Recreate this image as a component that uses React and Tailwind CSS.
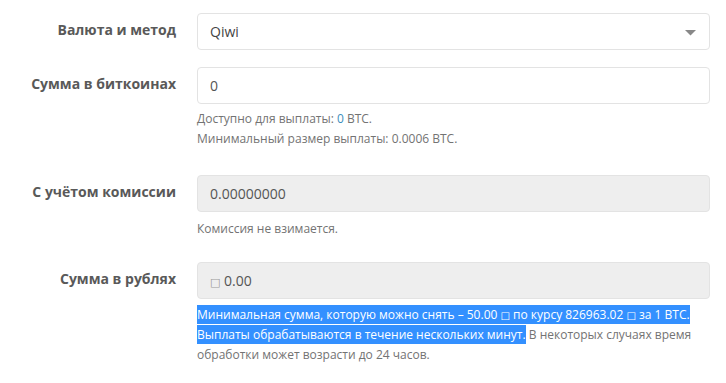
import React from "react";

const tofuFont = { fontFamily: '"DejaVu Sans", sans-serif' };

function Row({ label, children, className = "" }) {
  return (
    <div className={`flex items-start ${className}`}>
      <label className="w-[177px] shrink-0 pr-px pt-[7px] text-right text-[14px] font-bold leading-5 text-[#595959]">
        {label}
      </label>
      <div className="ml-[20px] w-[513px]">{children}</div>
    </div>
  );
}

function Field({ value, disabled }) {
  return (
    <div
      className={`flex h-[37px] items-center rounded border border-[#e3e3e3] px-3 text-[14px] text-[#555] ${
        disabled ? "bg-[#eeeeee]" : "bg-white"
      }`}
    >
      {value}
    </div>
  );
}

function Help({ children, className = "" }) {
  return <div className={`text-[12px] leading-5 text-[#737373] ${className}`}>{children}</div>;
}

export default function App() {
  return (
    <div
      className="min-h-[383px] w-[726px] bg-white pt-[13px]"
      style={{ fontFamily: '"Open Sans", "DejaVu Sans", sans-serif' }}
    >
      <Row label="Валюта и метод">
        <div className="relative flex h-[37px] items-center rounded border border-[#e3e3e3] bg-white px-3 text-[14px] text-[#444]">
          Qiwi
          <svg className="absolute right-[13px] top-[16px]" width="11" height="6" viewBox="0 0 11 6">
            <path d="M0 0 H11 L5.5 5.5 Z" fill="#888" />
          </svg>
        </div>
      </Row>

      <Row label="Сумма в биткоинах" className="mt-[17px]">
        <Field value="0" />
        <Help className="mt-[5px]">
          <div>
            Доступно для выплаты: <span className="text-[#3c8dbc]">0</span> BTC.
          </div>
          <div>Минимальный размер выплаты: 0.0006 BTC.</div>
        </Help>
      </Row>

      <Row label="С учётом комиссии" className="mt-[26px]">
        <Field value="0.00000000" disabled />
        <Help className="mt-[7px]">Комиссия не взимается.</Help>
      </Row>

      <Row label="Сумма в рублях" className="mt-[23px]">
        <Field
          disabled
          value={
            <span>
              <span className="text-[11px] text-[#999]" style={tofuFont}>□</span> 0.00
            </span>
          }
        />
        <Help className="mt-[6px] pr-[14px]">
          <span className="box-decoration-clone bg-[#3390ff] py-px text-white">
            Минимальная сумма, которую можно снять – 50.00{" "}
            <span className="text-[10px] leading-3" style={tofuFont}>□</span> по курсу 826963.02{" "}
            <span className="text-[10px] leading-3" style={tofuFont}>□</span> за 1 BTC. Выплаты
            обрабатываются в течение нескольких минут.
          </span>{" "}
          В некоторых случаях время обработки может возрасти до 24 часов.
        </Help>
      </Row>
    </div>
  );
}
